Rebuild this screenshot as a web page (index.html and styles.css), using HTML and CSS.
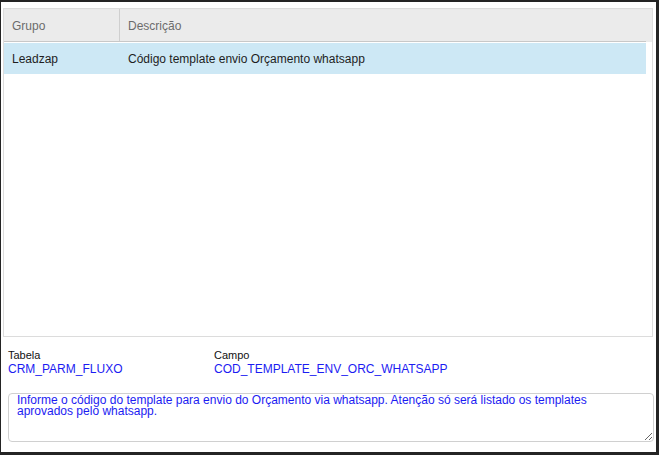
FILE: index.html
```html
<!DOCTYPE html>
<html lang="pt-BR">
<head>
<meta charset="utf-8">
<title>Parâmetros</title>
<link rel="stylesheet" href="styles.css">
</head>
<body>
<div class="window">
  <div class="grid">
    <div class="grid-head">
      <div class="cols">
        <div class="cell col-grupo head-cell">Grupo</div>
        <div class="cell col-desc">Descrição</div>
      </div>
    </div>
    <div class="grid-body">
      <div class="cols row selected">
        <div class="cell col-grupo">Leadzap</div>
        <div class="cell col-desc">Código template envio Orçamento whatsapp</div>
      </div>
    </div>
  </div>
  <div class="info">
    <div class="field field-tabela">
      <div class="label">Tabela</div>
      <div class="value">CRM_PARM_FLUXO</div>
    </div>
    <div class="field">
      <div class="label">Campo</div>
      <div class="value">COD_TEMPLATE_ENV_ORC_WHATSAPP</div>
    </div>
  </div>
  <textarea class="help" readonly>Informe o código do template para envio do Orçamento via whatsapp. Atenção só será listado os templates aprovados pelo whatsapp.</textarea>
</div>
</body>
</html>
```

FILE: styles.css
```css
html, body {
  margin: 0;
  padding: 0;
}
body {
  background: #242424;
  width: 659px;
  height: 455px;
  overflow: hidden;
  font-family: "Liberation Sans", Arial, sans-serif;
  font-size: 12px;
}
.window {
  margin: 2px 3px 0 1px;
  height: 450px;
  background: #ffffff;
  display: flex;
  flex-direction: column;
  box-sizing: border-box;
  padding: 6px 3px 0 2px;
}
.grid {
  height: 329px;
  border: 1px solid #dcdcdc;
  box-sizing: border-box;
  display: flex;
  flex-direction: column;
}
.grid-head {
  background: #ebebeb;
  height: 33px;
  flex: none;
}
.cols {
  display: flex;
  width: 642px;
}
.grid-head .cols {
  height: 33px;
  border-bottom: 1px solid #c8c8c8;
  box-sizing: border-box;
}
.cell {
  display: flex;
  align-items: center;
  box-sizing: border-box;
}
.col-grupo {
  width: 116px;
  padding-left: 8px;
}
.col-desc {
  flex: 1;
  padding-left: 8px;
}
.grid-head .cell {
  color: #6b6b6b;
  padding-top: 1px;
}
.head-cell {
  border-right: 1px solid #cfcfcf;
}
.grid-body {
  flex: 1;
  padding-top: 1px;
}
.row {
  height: 31px;
  color: #1e1e1e;
}
.row .cell {
  padding-top: 1px;
}
.selected {
  background: #cde8f5;
}
.info {
  display: flex;
  padding: 12px 0 0 5px;
  height: 46px;
  box-sizing: border-box;
}
.field-tabela {
  width: 206px;
}
.label {
  font-size: 11px;
  color: #111;
  line-height: 13px;
}
.value {
  color: #1c1cf2;
  font-size: 12px;
  line-height: 14px;
}
.help {
  margin: 10px 0 0 5px;
  width: 646px;
  height: 49px;
  box-sizing: border-box;
  border: 1px solid #d0d0d0;
  border-radius: 4px;
  padding: 1px 8px 0 8px;
  font-family: "Liberation Sans", Arial, sans-serif;
  font-size: 12px;
  line-height: 11px;
  color: #1c1cf2;
  background: #fff;
  resize: both;
  outline: none;
  overflow: hidden;
}
```
